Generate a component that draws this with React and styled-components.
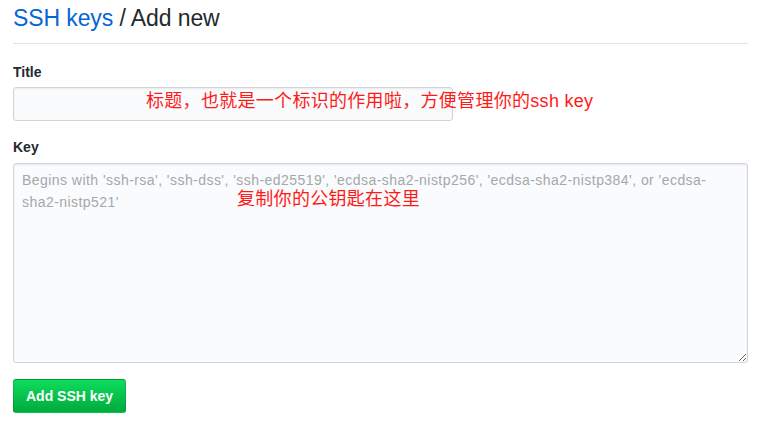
import styled, { createGlobalStyle } from "styled-components";

const GlobalStyle = createGlobalStyle`
  body {
    margin: 0;
    background: #fff;
    font-family: "Liberation Sans", Arial, "Noto Sans CJK SC", sans-serif;
    color: #24292e;
  }
`;

const Page = styled.div`
  position: relative;
  width: 735px;
  padding: 0 0 0 13px;
`;

const Subhead = styled.h2`
  margin: 0 0 18px;
  padding: 3px 0 10px;
  border-bottom: 1px solid #e1e4e8;
  font-size: 23px;
  line-height: 30px;
  font-weight: 400;
  letter-spacing: -0.1px;
  color: #24292e;

  a {
    color: #0366d6;
    text-decoration: none;
  }
`;

const Field = styled.div`
  margin-bottom: ${(p) => p.$gap || "16px"};
`;

const Label = styled.label`
  display: block;
  margin-bottom: ${(p) => p.$space || "4px"};
  font-size: 14px;
  line-height: 21px;
  font-weight: 700;
  color: #24292e;
`;

const Input = styled.input`
  box-sizing: border-box;
  display: block;
  width: 440px;
  height: 34px;
  padding: 6px 8px;
  font-size: 14px;
  font-family: inherit;
  background: #fafbfc;
  border: 1px solid #d1d5da;
  border-radius: 3px;
  box-shadow: inset 0 1px 2px rgba(27, 31, 35, 0.075);
  outline: none;
`;

const TextArea = styled.textarea`
  box-sizing: border-box;
  display: block;
  width: 735px;
  height: 200px;
  padding: 5px 8px;
  font-size: 14px;
  line-height: 22px;
  letter-spacing: 0.45px;
  font-family: inherit;
  color: #24292e;
  background: #fafbfc;
  border: 1px solid #d1d5da;
  border-radius: 3px;
  box-shadow: inset 0 1px 2px rgba(27, 31, 35, 0.075);
  outline: none;

  &::placeholder {
    color: #a3a8ad;
  }
`;

const Button = styled.button`
  box-sizing: border-box;
  height: 34px;
  padding: 0 12px;
  font-family: inherit;
  font-size: 14px;
  font-weight: 700;
  color: #fff;
  border: 1px solid rgba(27, 31, 35, 0.15);
  border-radius: 3px;
  background-image: linear-gradient(-180deg, #0ddc5e 0%, #00ad3d 95%);
  cursor: pointer;
`;

const Note = styled.span`
  position: absolute;
  left: ${(p) => p.$x}px;
  top: ${(p) => p.$y}px;
  font-size: 18px;
  line-height: 22px;
  letter-spacing: 0.3px;
  color: #ff1a1a;
  white-space: nowrap;
  pointer-events: none;
`;

export default function App() {
  return (
    <>
      <GlobalStyle />
      <Page>
        <Subhead>
          <a href="#keys">SSH keys</a> / Add new
        </Subhead>
        <Field>
          <Label>Title</Label>
          <Input type="text" />
        </Field>
        <Field>
          <Label $space="5px">Key</Label>
          <TextArea placeholder="Begins with 'ssh-rsa', 'ssh-dss', 'ssh-ed25519', 'ecdsa-sha2-nistp256', 'ecdsa-sha2-nistp384', or 'ecdsa-sha2-nistp521'" />
        </Field>
        <Button>Add SSH key</Button>
        <Note $x={146} $y={90}>标题，也就是一个标识的作用啦，方便管理你的ssh key</Note>
        <Note $x={237} $y={188}>复制你的公钥匙在这里</Note>
      </Page>
    </>
  );
}
